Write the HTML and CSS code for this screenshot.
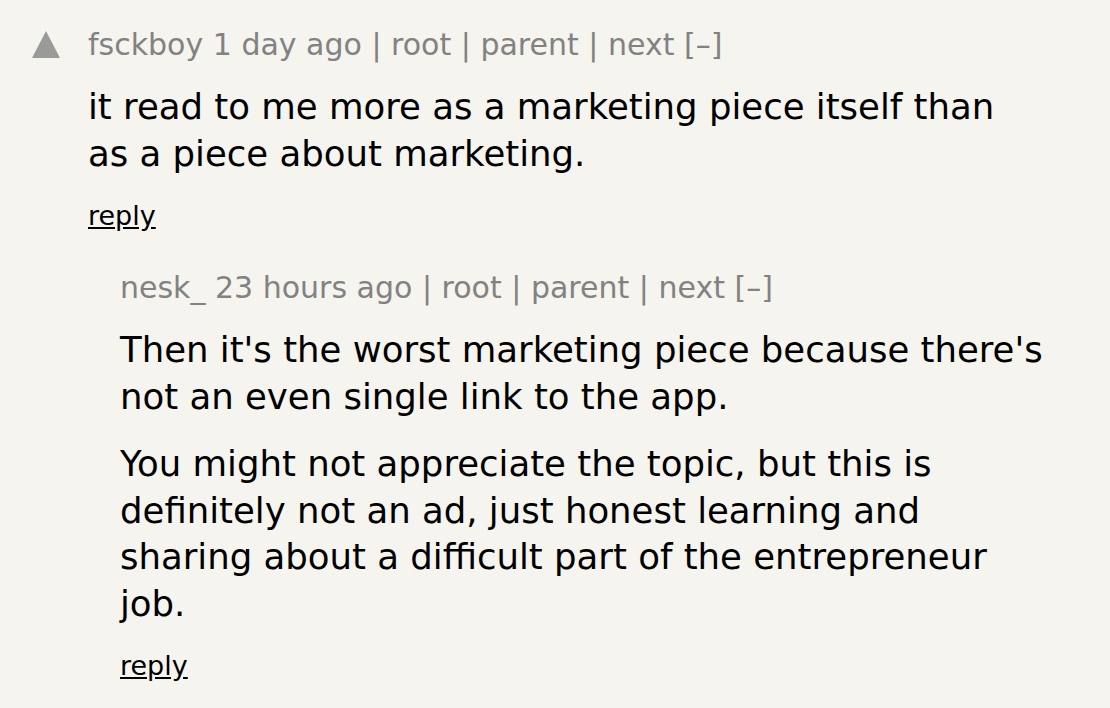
FILE: index.html
```html
<!DOCTYPE html>
<html>
<head>
<meta charset="utf-8">
<link rel="stylesheet" href="styles.css">
</head>
<body>
<div class="thread">
  <div class="comment">
    <div class="vote"><span class="arrow"></span></div>
    <div class="content">
      <div class="meta"><a class="user">fsckboy</a> <span>1 day ago</span> | <a>root</a> | <a>parent</a> | <a>next</a> [–]</div>
      <div class="text">
        <p>it read to me more as a marketing piece itself than as a piece about marketing.</p>
      </div>
      <div class="reply"><a>reply</a></div>
    </div>
  </div>
  <div class="comment nested">
    <div class="content">
      <div class="meta"><a class="user">nesk_</a> <span>23 hours ago</span> | <a>root</a> | <a>parent</a> | <a>next</a> [–]</div>
      <div class="text">
        <p>Then it's the worst marketing piece because there's not an even single link to the app.</p>
        <p>You might not appreciate the topic, but this is definitely not an ad, just honest learning and sharing about a difficult part of the entrepreneur job.</p>
      </div>
      <div class="reply"><a>reply</a></div>
    </div>
  </div>
</div>
</body>
</html>
```
FILE: styles.css
```css
html, body {
  margin: 0;
  padding: 0;
  background: #f5f4ef;
}
body {
  font-family: "DejaVu Sans", Verdana, sans-serif;
  color: #000;
}
.thread {
  width: 1044px;
  padding: 26px 0 0 0;
}
.comment {
  display: flex;
}
.vote {
  width: 88px;
  flex: none;
  display: flex;
  justify-content: flex-start;
  padding-left: 32px;
  box-sizing: border-box;
  padding-top: 5px;
}
.arrow {
  width: 0;
  height: 0;
  border-left: 14px solid transparent;
  border-right: 14px solid transparent;
  border-bottom: 27px solid #9a9a9a;
}
.content {
  flex: 1;
}
.nested {
  padding-left: 120px;
  margin-top: 38px;
}
.meta {
  font-size: 30px;
  color: #828282;
  line-height: 38px;
}
.text {
  font-size: 35.5px;
  line-height: 46.5px;
  margin-top: 20px;
}
.text p {
  margin: 0 0 21px 0;
}
.reply {
  font-size: 27px;
  line-height: 30px;
  margin-top: 24px;
}
.reply a {
  color: #000;
  text-decoration: underline;
}
```
